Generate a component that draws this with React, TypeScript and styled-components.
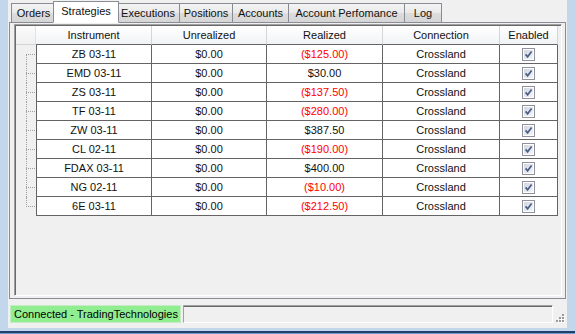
import styled, { createGlobalStyle } from 'styled-components'

const GlobalStyle = createGlobalStyle`
  html, body {
    margin: 0;
    padding: 0;
    background: #f0f0f0;
  }

  body {
    color: #000;
    font-family: "Liberation Sans", Arial, sans-serif;
    font-size: 11px;
  }
`

const Window = styled.div`
  display: flex;
  flex-direction: column;
  height: 334px;
  overflow: hidden;
  width: 575px;
`

const Main = styled.div`
  background: #f0f0f0;
  border-left: 8px solid #c2d6ec;
  border-right: 8px solid #c2d6ec;
  display: flex;
  flex: 1;
  flex-direction: column;
  min-height: 0;
`

const BottomFrame = styled.div`
  background: linear-gradient(#c2d6ec 0 3px, #1f3f6c 3px 5px, #6f9ccf 5px);
  height: 6px;
`

const TabStrip = styled.div`
  align-items: flex-end;
  display: flex;
  height: 23px;
  margin-bottom: -1px;
  padding-left: 4px;
  position: relative;
  z-index: 1;
`

const Tab = styled.div<{ $active?: boolean; $width: number }>`
  align-items: center;
  background: ${({ $active }) =>
    $active ? '#fff' : 'linear-gradient(#f4f4f4, #e9e9e9 50%, #dcdcdc 51%, #d6d6d6)'};
  border: 1px solid #898c95;
  border-bottom: ${({ $active }) => ($active ? '1px solid #fff' : 'none')};
  box-sizing: border-box;
  color: #111;
  display: flex;
  height: ${({ $active }) => ($active ? 22 : 19)}px;
  justify-content: center;
  margin: ${({ $active }) => ($active ? '0 -2px 0 -3px' : '0 0 1px -1px')};
  padding-bottom: ${({ $active }) => ($active ? 3 : 0)}px;
  position: relative;
  white-space: nowrap;
  width: ${({ $width }) => $width}px;
  z-index: ${({ $active }) => ($active ? 2 : 0)};
`

const TabPage = styled.div`
  border: 1px solid #898c95;
  box-sizing: border-box;
  display: flex;
  height: 277px;
  margin: 0 1px;
  padding: 1px 3px 2px 4px;
`

const GridBox = styled.div`
  background: #f0f0f0;
  border-color: #a0a0a0 #fff #fff #a0a0a0;
  border-style: solid;
  border-width: 1px;
  box-shadow: inset 1px 1px 0 #696969;
  box-sizing: border-box;
  flex: 1;
  padding: 1px 0 0 1px;
`

const GridRow = styled.div`
  color: #111;
  display: grid;
  grid-template-columns: 20px 116px 115px 116px 117px 58px;
  height: 19px;
`

const Corner = styled.div`
  background: linear-gradient(#fbfbfb, #f0f0f0);
  border-bottom: 1px solid #d5d5d5;
  border-right: 1px solid #e2e2e2;
`

const HeaderCell = styled.div`
  align-items: center;
  background: linear-gradient(#ffffff, #f7f8fa 60%, #f1f2f4);
  border-bottom: 1px solid #646464;
  border-right: 1px solid #d5d5d5;
  display: flex;
  justify-content: center;
`

const RowHeader = styled.div<{ $first?: boolean; $last?: boolean }>`
  position: relative;

  &::before {
    border-left: 1px dotted #a0a0a0;
    bottom: ${({ $last }) => ($last ? '9px' : '0')};
    content: '';
    left: 10px;
    position: absolute;
    top: ${({ $first }) => ($first ? '9px' : '0')};
  }

  &::after {
    border-top: 1px dotted #a0a0a0;
    content: '';
    left: 10px;
    position: absolute;
    right: 1px;
    top: 9px;
  }
`

const Cell = styled.div<{ $first?: boolean; $negative?: boolean }>`
  align-items: center;
  background: #fff;
  border-bottom: 1px solid #646464;
  border-left: ${({ $first }) => ($first ? '1px solid #646464' : 'none')};
  border-right: 1px solid #646464;
  color: ${({ $negative }) => ($negative ? '#f00' : '#111')};
  display: flex;
  justify-content: center;
`

const StatusBar = styled.div`
  align-items: flex-start;
  display: flex;
  flex: 1;
  padding: 6px 0 0 2px;
`

const StatusPanel = styled.div`
  align-items: center;
  background: #90ee90;
  border: 1px solid #c6ecc6;
  box-sizing: border-box;
  display: flex;
  height: 18px;
  padding-left: 3px;
  white-space: nowrap;
  width: 171px;
`

const EmptyPanel = styled.div`
  border-color: #a0a0a0 #fff #fff #a0a0a0;
  border-style: solid;
  border-width: 1px;
  box-shadow: inset 0 1px 0 #696969;
  box-sizing: border-box;
  flex: 1;
  height: 18px;
  margin-left: 2px;
`

const Grip = styled.svg`
  display: block;
  margin: 8px 2px 0 2px;
`

const CheckBox = () => (
  <svg width="13" height="13" viewBox="0 0 13 13">
    <defs>
      <linearGradient id="cb" x1="0" y1="0" x2="1" y2="1">
        <stop offset="0" stopColor="#d3d6de" />
        <stop offset="1" stopColor="#f4f5f8" />
      </linearGradient>
    </defs>
    <rect x="0.5" y="0.5" width="12" height="12" fill="#fff" stroke="#8f929a" />
    <rect x="2" y="2" width="9" height="9" fill="url(#cb)" />
    <path d="M3.6 6.4 L5.6 8.8 L9.6 3.4" fill="none" stroke="#4b5e8c" strokeWidth="1.7" />
  </svg>
)

const tabs: [string, number][] = [
  ['Orders', 45],
  ['Strategies', 66],
  ['Executions', 64],
  ['Positions', 54],
  ['Accounts', 57],
  ['Account Perfomance', 117],
  ['Log', 38],
]

const rows = [
  ['ZB 03-11', '$0.00', '($125.00)'],
  ['EMD 03-11', '$0.00', '$30.00'],
  ['ZS 03-11', '$0.00', '($137.50)'],
  ['TF 03-11', '$0.00', '($280.00)'],
  ['ZW 03-11', '$0.00', '$387.50'],
  ['CL 02-11', '$0.00', '($190.00)'],
  ['FDAX 03-11', '$0.00', '$400.00'],
  ['NG 02-11', '$0.00', '($10.00)'],
  ['6E 03-11', '$0.00', '($212.50)'],
]

const App = () => (
  <Window>
    <GlobalStyle />
    <Main>
      <TabStrip>
        {tabs.map(([label, width]) => (
          <Tab key={label} $width={width} $active={label === 'Strategies'}>
            {label}
          </Tab>
        ))}
      </TabStrip>
      <TabPage>
        <GridBox>
          <GridRow>
            <Corner />
            <HeaderCell>Instrument</HeaderCell>
            <HeaderCell>Unrealized</HeaderCell>
            <HeaderCell>Realized</HeaderCell>
            <HeaderCell>Connection</HeaderCell>
            <HeaderCell>Enabled</HeaderCell>
          </GridRow>
          {rows.map(([instrument, unrealized, realized], i) => (
            <GridRow key={instrument}>
              <RowHeader $first={i === 0} $last={i === rows.length - 1} />
              <Cell $first>{instrument}</Cell>
              <Cell>{unrealized}</Cell>
              <Cell $negative={realized.startsWith('(')}>{realized}</Cell>
              <Cell>Crossland</Cell>
              <Cell>
                <CheckBox />
              </Cell>
            </GridRow>
          ))}
        </GridBox>
      </TabPage>
      <StatusBar>
        <StatusPanel>Connected - TradingTechnologies</StatusPanel>
        <EmptyPanel />
        <Grip width="10" height="11" viewBox="0 0 10 11">
          {[
            [7, 1],
            [4, 4],
            [7, 4],
            [1, 7],
            [4, 7],
            [7, 7],
          ].map(([x, y]) => (
            <g key={`${x}-${y}`}>
              <rect x={x + 1} y={y + 1} width="2" height="2" fill="#fff" />
              <rect x={x} y={y} width="2" height="2" fill="#9a9a9a" />
            </g>
          ))}
        </Grip>
      </StatusBar>
    </Main>
    <BottomFrame />
  </Window>
)

export default App
